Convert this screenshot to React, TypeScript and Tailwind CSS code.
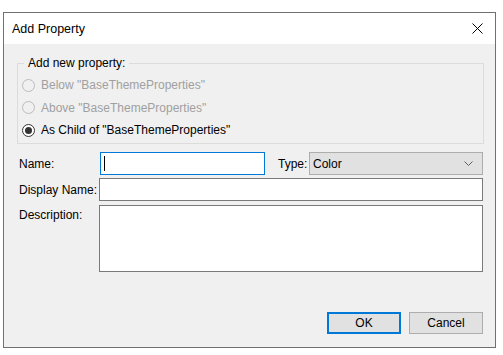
import React from "react";

function Radio({ checked, disabled }: { checked?: boolean; disabled?: boolean }) {
  return (
    <span
      className={
        "flex h-[13px] w-[13px] shrink-0 items-center justify-center rounded-full border " +
        (disabled ? "border-[#bcbcbc] bg-[#f0f0f0]" : "border-[#333333] bg-white")
      }
    >
      {checked && <span className="h-[7px] w-[7px] rounded-full bg-[#333333]" />}
    </span>
  );
}

export default function App() {
  return (
    <div
      className="h-[355px] w-[503px] bg-white pl-[3px] pt-[12px] text-[12px] leading-[16px] text-black"
      style={{ fontFamily: '"Liberation Sans", Arial, sans-serif' }}
    >
      <div className="flex h-[336px] w-[493px] flex-col border border-[#707070] bg-[#f0f0f0]">
        {/* title bar */}
        <div className="flex h-[31px] shrink-0 items-center justify-between bg-white pl-[8px] pr-[10px]">
          <span className="text-[12.5px]">Add Property</span>
          <svg width="11" height="11" viewBox="0 0 11 11" className="mr-[2px]">
            <path d="M0.5 0.5 L10.5 10.5 M10.5 0.5 L0.5 10.5" stroke="#000" strokeWidth="1" fill="none" />
          </svg>
        </div>

        {/* content */}
        <div className="flex flex-1 flex-col pl-[13px] pr-[11px]">
          <fieldset className="mt-[11px] h-[89px] border border-[#dcdcdc]">
            <legend className="ml-[6px] px-[4px] leading-[16px]">Add new property:</legend>
            <div className="flex flex-col pl-[4px] pt-[3px]">
              <label className="flex h-[22px] items-center gap-[6px] text-[#a0a0a0]">
                <Radio disabled />
                <span>Below "BaseThemeProperties"</span>
              </label>
              <label className="flex h-[23px] items-center gap-[6px] text-[#a0a0a0]">
                <Radio disabled />
                <span>Above "BaseThemeProperties"</span>
              </label>
              <label className="flex h-[22px] items-center gap-[6px]">
                <Radio checked />
                <span>As Child of "BaseThemeProperties"</span>
              </label>
            </div>
          </fieldset>

          {/* form */}
          <div className="mt-[8px] flex flex-col gap-[3px] pl-[2px]">
            <div className="flex h-[23px] items-center">
              <span className="w-[80px]">Name:</span>
              <div className="relative ml-[1px] h-[23px] w-[165px] border border-[#0078d7] bg-white">
                <span className="absolute left-[3px] top-[3px] h-[15px] w-[1px] bg-black" />
              </div>
              <span className="ml-[13px] w-[31px]">Type:</span>
              <div className="flex h-[23px] w-[174px] items-center justify-between border border-[#adadad] bg-[#e1e1e1] pl-[3px] pr-[9px]">
                <span>Color</span>
                <svg width="9" height="5" viewBox="0 0 9 5">
                  <path d="M0.5 0.5 L4.5 4.5 L8.5 0.5" stroke="#606060" strokeWidth="1" fill="none" />
                </svg>
              </div>
            </div>
            <div className="flex h-[23px] items-center">
              <span className="w-[80px]">Display Name:</span>
              <div className="h-[23px] w-[384px] border border-[#7a7a7a] bg-white" />
            </div>
            <div className="flex items-start">
              <span className="mt-[3px] w-[80px]">Description:</span>
              <div className="mt-[1px] h-[67px] w-[384px] border border-[#7a7a7a] bg-white" />
            </div>
          </div>

          {/* buttons */}
          <div className="mt-[40px] flex justify-end gap-[8px] pr-[1px]">
            <button className="h-[22px] w-[74px] border-2 border-[#0078d7] bg-[#e1e1e1]">OK</button>
            <button className="h-[22px] w-[74px] border border-[#adadad] bg-[#e1e1e1]">Cancel</button>
          </div>
        </div>
      </div>
    </div>
  );
}
